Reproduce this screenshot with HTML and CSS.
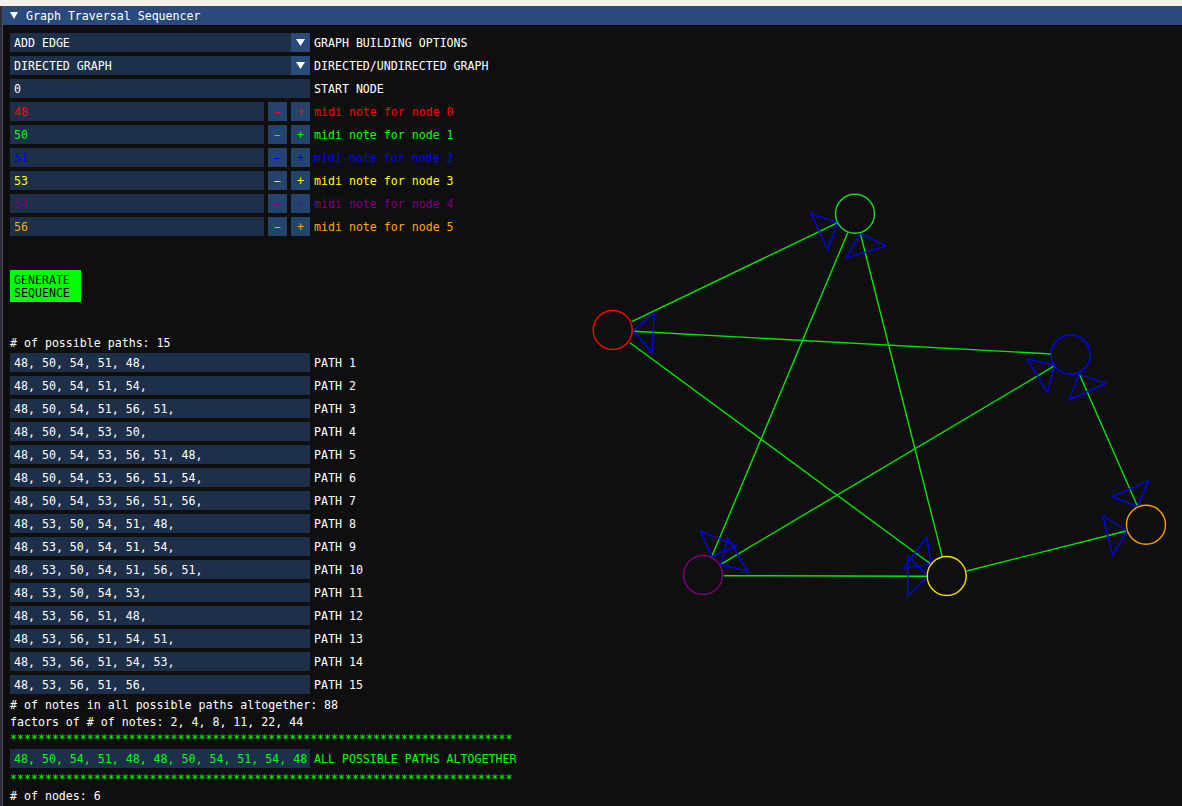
FILE: index.html
```html
<!DOCTYPE html>
<html>
<head>
<meta charset="utf-8">
<title>Graph Traversal Sequencer</title>
<link rel="stylesheet" href="styles.css">
</head>
<body>
<div class="topstrip"></div>
<div class="window">
  <div class="titlebar">
    <svg class="title-tri" width="8" height="7" viewBox="0 0 8 7"><polygon points="0,0 8,0 4,7" fill="#fff"/></svg>
    <span class="title">Graph Traversal Sequencer</span>
  </div>
  <div class="content">
    <div class="row">
      <div class="frame combo"><span class="val">ADD EDGE</span><span class="arrow"><svg width="9" height="7" viewBox="0 0 9 7"><polygon points="0,0 9,0 4.5,7" fill="#fff"/></svg></span></div>
      <span class="label">GRAPH BUILDING OPTIONS</span>
    </div>
    <div class="row">
      <div class="frame combo"><span class="val">DIRECTED GRAPH</span><span class="arrow"><svg width="9" height="7" viewBox="0 0 9 7"><polygon points="0,0 9,0 4.5,7" fill="#fff"/></svg></span></div>
      <span class="label">DIRECTED/UNDIRECTED GRAPH</span>
    </div>
    <div class="row">
      <div class="frame wide"><span class="val">0</span></div>
      <span class="label">START NODE</span>
    </div>

    <div class="row c-red">
      <div class="frame note"><span class="val">48</span></div>
      <span class="btn">−</span><span class="btn">+</span>
      <span class="label">midi note for node 0</span>
    </div>
    <div class="row c-green">
      <div class="frame note"><span class="val">50</span></div>
      <span class="btn">−</span><span class="btn">+</span>
      <span class="label">midi note for node 1</span>
    </div>
    <div class="row c-blue">
      <div class="frame note"><span class="val">51</span></div>
      <span class="btn">−</span><span class="btn">+</span>
      <span class="label">midi note for node 2</span>
    </div>
    <div class="row c-yellow">
      <div class="frame note"><span class="val">53</span></div>
      <span class="btn">−</span><span class="btn">+</span>
      <span class="label">midi note for node 3</span>
    </div>
    <div class="row c-purple">
      <div class="frame note"><span class="val">54</span></div>
      <span class="btn">−</span><span class="btn">+</span>
      <span class="label">midi note for node 4</span>
    </div>
    <div class="row c-orange">
      <div class="frame note"><span class="val">56</span></div>
      <span class="btn">−</span><span class="btn">+</span>
      <span class="label">midi note for node 5</span>
    </div>

    <div class="spacer"></div>
    <div class="gen-btn">GENERATE<br>SEQUENCE</div>
    <div class="spacer"></div>

    <div class="text"># of possible paths: 15</div>
    <div class="row"><div class="frame wide"><span class="val">48, 50, 54, 51, 48,</span></div><span class="label">PATH 1</span></div>
    <div class="row"><div class="frame wide"><span class="val">48, 50, 54, 51, 54,</span></div><span class="label">PATH 2</span></div>
    <div class="row"><div class="frame wide"><span class="val">48, 50, 54, 51, 56, 51,</span></div><span class="label">PATH 3</span></div>
    <div class="row"><div class="frame wide"><span class="val">48, 50, 54, 53, 50,</span></div><span class="label">PATH 4</span></div>
    <div class="row"><div class="frame wide"><span class="val">48, 50, 54, 53, 56, 51, 48,</span></div><span class="label">PATH 5</span></div>
    <div class="row"><div class="frame wide"><span class="val">48, 50, 54, 53, 56, 51, 54,</span></div><span class="label">PATH 6</span></div>
    <div class="row"><div class="frame wide"><span class="val">48, 50, 54, 53, 56, 51, 56,</span></div><span class="label">PATH 7</span></div>
    <div class="row"><div class="frame wide"><span class="val">48, 53, 50, 54, 51, 48,</span></div><span class="label">PATH 8</span></div>
    <div class="row"><div class="frame wide"><span class="val">48, 53, 50, 54, 51, 54,</span></div><span class="label">PATH 9</span></div>
    <div class="row"><div class="frame wide"><span class="val">48, 53, 50, 54, 51, 56, 51,</span></div><span class="label">PATH 10</span></div>
    <div class="row"><div class="frame wide"><span class="val">48, 53, 50, 54, 53,</span></div><span class="label">PATH 11</span></div>
    <div class="row"><div class="frame wide"><span class="val">48, 53, 56, 51, 48,</span></div><span class="label">PATH 12</span></div>
    <div class="row"><div class="frame wide"><span class="val">48, 53, 56, 51, 54, 51,</span></div><span class="label">PATH 13</span></div>
    <div class="row"><div class="frame wide"><span class="val">48, 53, 56, 51, 54, 53,</span></div><span class="label">PATH 14</span></div>
    <div class="row"><div class="frame wide"><span class="val">48, 53, 56, 51, 56,</span></div><span class="label">PATH 15</span></div>

    <div class="text"># of notes in all possible paths altogether: 88</div>
    <div class="text">factors of # of notes: 2, 4, 8, 11, 22, 44</div>
    <div class="text c-green">************************************************************************</div>
    <div class="row c-green">
      <div class="frame all"><span class="val">48, 50, 54, 51, 48, 48, 50, 54, 51, 54, 48</span></div>
      <span class="label">ALL POSSIBLE PATHS ALTOGETHER</span>
    </div>
    <div class="text c-green">************************************************************************</div>
    <div class="text"># of nodes: 6</div>
  </div>
</div>

<svg class="graph" width="1182" height="806" viewBox="0 0 1182 806">
  <g class="edges">
    <line x1="631.7" y1="321.7" x2="837.7" y2="222.7"/>
    <line x1="633.3" y1="331.3" x2="1051.7" y2="354"/>
    <line x1="630" y1="342.7" x2="931" y2="564.3"/>
    <line x1="847.7" y1="232.7" x2="711.7" y2="556.7"/>
    <line x1="860.3" y1="233.3" x2="942.3" y2="556.7"/>
    <line x1="720.7" y1="564.3" x2="1054.7" y2="365.7"/>
    <line x1="723.7" y1="575.7" x2="928.3" y2="576.3"/>
    <line x1="1079.3" y1="374" x2="1137.7" y2="506.7"/>
    <line x1="966.7" y1="571" x2="1127" y2="530.7"/>
  </g>
  <g class="arrows">
    <polygon points="811,213.7 837.7,222.7 827.7,249.3"/>
    <polygon points="860.3,233.3 886,246 846,258"/>
    <polygon points="633.3,331 654,313 652.3,352.7"/>
    <polygon points="700.7,531 736.7,546 711.7,556.7"/>
    <polygon points="727.7,537.7 747.7,571.7 720.7,564.3"/>
    <polygon points="927,536.7 931,564.3 903.7,568.3"/>
    <polygon points="907.7,556 928.3,576.3 907.7,595.7"/>
    <polygon points="1027.3,359 1054.7,365 1047.3,392.3"/>
    <polygon points="1079.3,374 1105.7,383.7 1069.3,399.7"/>
    <polygon points="1112,496.7 1148.7,480.7 1137.7,506.7"/>
    <polygon points="1102.7,516 1127,530.7 1112.7,555"/>
  </g>
  <g class="nodes">
    <circle cx="612.7" cy="330" r="19.5" stroke="#ff0000"/>
    <circle cx="855" cy="213.7" r="19.5" stroke="#1ed81e"/>
    <circle cx="1070.7" cy="354.7" r="19.5" stroke="#0000ff"/>
    <circle cx="946.7" cy="576" r="19.5" stroke="#f0e000"/>
    <circle cx="703" cy="575" r="19.5" stroke="#800080"/>
    <circle cx="1146" cy="524.7" r="19.5" stroke="#f5a000"/>
  </g>
</svg>
</body>
</html>
```

FILE: styles.css
```css
html, body {
  margin: 0;
  padding: 0;
}

body {
  position: relative;
  width: 1182px;
  height: 806px;
  overflow: hidden;
  background: #2b2e36;
  font-family: "DejaVu Sans Mono", "Liberation Mono", monospace;
  font-size: 11.6px;
  line-height: 15px;
  color: #ffffff;
}

.topstrip {
  height: 6px;
  background: #f6efec;
}

.window {
  margin-left: 2px;
  height: 800px;
  background: #0f0f0f;
  border-left: 1px solid #4a4a55;
  overflow: hidden;
}

.titlebar {
  height: 19px;
  background: #294a7a;
  display: flex;
  align-items: flex-start;
  padding-left: 7px;
  gap: 8px;
}

.title-tri {
  display: block;
  margin-top: 6px;
}

.title {
  line-height: 21px;
  height: 19px;
}

.content {
  padding: 8px 0 0 7px;
  display: flex;
  flex-direction: column;
  gap: 4px;
}

.row {
  display: flex;
  align-items: flex-start;
  height: 19px;
}

.frame {
  height: 19px;
  box-sizing: border-box;
  background: #1d2f49;
  padding: 3px 4px 0 4px;
  display: flex;
  overflow: hidden;
  white-space: nowrap;
}

.val {
  flex: 1;
  overflow: hidden;
  white-space: nowrap;
  line-height: 15px;
}

.combo {
  width: 300px;
  padding-right: 0;
}

.arrow {
  width: 19px;
  height: 19px;
  margin-top: -3px;
  background: #294a7a;
  display: flex;
  align-items: center;
  justify-content: center;
}

.arrow svg {
  display: block;
}

.wide {
  width: 300px;
}

.note {
  width: 254px;
}

.all {
  width: 300px;
  padding-left: 4px;
}

.all .val {
  flex: none;
  width: 300px;
  overflow: visible;
}

.btn {
  width: 19px;
  height: 19px;
  margin-left: 4px;
  background: #23456d;
  text-align: center;
  line-height: 21px;
}

.label {
  margin-left: 4px;
  white-space: nowrap;
  line-height: 21px;
  height: 19px;
}

.text {
  height: 13px;
  line-height: 15px;
  white-space: nowrap;
}

.spacer {
  height: 26px;
}

.gen-btn {
  width: 71px;
  height: 32px;
  box-sizing: border-box;
  padding: 4px 4px 0 4px;
  line-height: 13px;
  background: #00ff00;
  color: #000000;
}

.c-red { color: #ff0000; }
.c-green { color: #00ff00; }
.c-blue { color: #0000ff; }
.c-yellow { color: #ffff00; }
.c-purple { color: #800080; }
.c-orange { color: #ffa500; }

.graph {
  position: absolute;
  top: 0;
  left: 0;
  pointer-events: none;
}

.edges line {
  stroke: #00e600;
  stroke-width: 1.4;
}

.arrows polygon {
  fill: none;
  stroke: #0000ff;
  stroke-width: 1.3;
  stroke-linejoin: miter;
}

.nodes circle {
  fill: none;
  stroke-width: 1.4;
}
```
